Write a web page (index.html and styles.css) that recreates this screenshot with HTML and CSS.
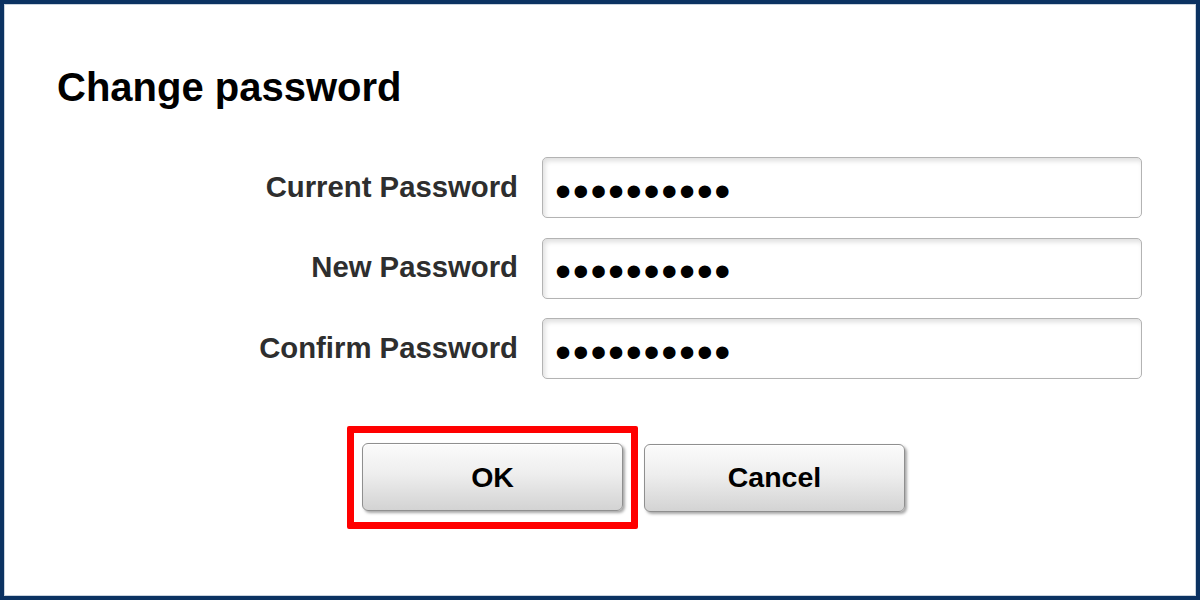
FILE: index.html
```html
<!DOCTYPE html>
<html lang="en">
<head>
<meta charset="utf-8">
<title>Change password</title>
<link rel="stylesheet" href="styles.css">
</head>
<body>
<div class="frame">
  <div class="dialog">
    <h1 class="title">Change password</h1>
    <div class="form">
      <label class="label">Current Password</label>
      <div class="field"><span class="dots">••••••••••</span></div>
      <label class="label">New Password</label>
      <div class="field"><span class="dots">••••••••••</span></div>
      <label class="label">Confirm Password</label>
      <div class="field"><span class="dots">••••••••••</span></div>
    </div>
    <div class="actions">
      <div class="highlight"><button class="btn">OK</button></div>
      <button class="btn">Cancel</button>
    </div>
  </div>
</div>
</body>
</html>
```

FILE: styles.css
```css
html, body {
  margin: 0;
  padding: 0;
  background: #ffffff;
}

.frame {
  box-sizing: border-box;
  width: 1200px;
  height: 600px;
  border: 4px solid #0b3262;
  box-shadow: inset 0 0 0 1px #c9d3de;
  background: #ffffff;
  font-family: "Liberation Sans", Arial, sans-serif;
}

.dialog {
  padding: 63px 0 0 53px;
}

.title {
  margin: 0;
  font-size: 40px;
  line-height: 1;
  font-weight: bold;
  color: #000000;
}

.form {
  margin-top: 50px;
  display: grid;
  grid-template-columns: 461px 600px;
  grid-auto-rows: 61px;
  column-gap: 24px;
  row-gap: 19.5px;
}

.label {
  display: flex;
  align-items: center;
  justify-content: flex-end;
  font-size: 29.3px;
  font-weight: bold;
  color: #2e2e2e;
  padding-bottom: 2px;
}

.field {
  box-sizing: border-box;
  display: flex;
  align-items: center;
  border: 1px solid #b3b3b3;
  border-radius: 5px;
  background: #ffffff;
  box-shadow: inset 2px 3px 5px rgba(0, 0, 0, 0.13);
  padding-left: 12px;
}

.dots {
  font-family: "Liberation Sans", Arial, sans-serif;
  font-size: 46px;
  line-height: 1;
  letter-spacing: 1.6px;
  color: #000000;
  position: relative;
  top: 3px;
}

.actions {
  margin-top: 47px;
  margin-left: 290px;
  display: flex;
  align-items: center;
  gap: 6px;
}

.highlight {
  border: 7px solid #ff0000;
  border-radius: 2px;
  padding: 10px 8px 11px 8px;
  display: flex;
}

.btn {
  box-sizing: border-box;
  width: 261px;
  height: 68px;
  margin: 0;
  padding: 0;
  border: 1px solid #8f8f8f;
  border-radius: 6px;
  background: linear-gradient(to bottom, #fbfbfb 0%, #eeeeee 45%, #d3d3d3 100%);
  box-shadow: 2px 2px 3px rgba(0, 0, 0, 0.35), inset 0 1px 0 #ffffff;
  font-family: "Liberation Sans", Arial, sans-serif;
  font-size: 28.5px;
  font-weight: bold;
  color: #000000;
  cursor: pointer;
}
```
